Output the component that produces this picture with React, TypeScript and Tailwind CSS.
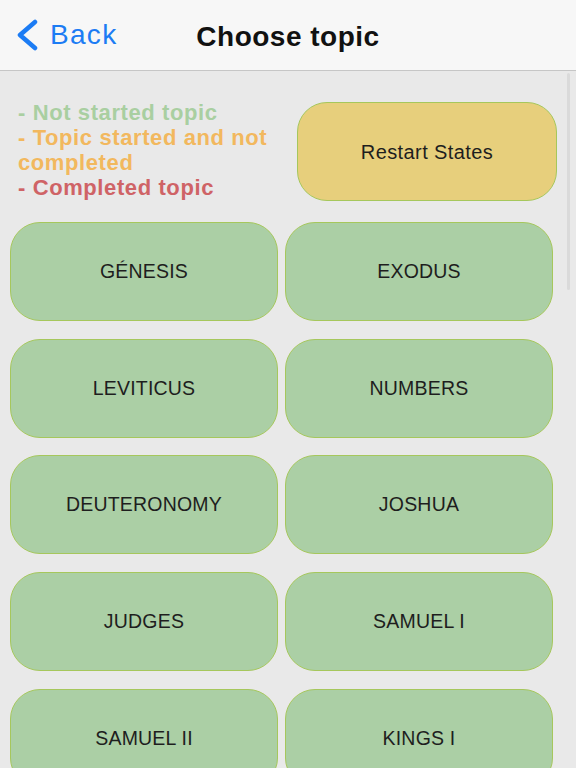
const topics = [
  "GÉNESIS",
  "EXODUS",
  "LEVITICUS",
  "NUMBERS",
  "DEUTERONOMY",
  "JOSHUA",
  "JUDGES",
  "SAMUEL I",
  "SAMUEL II",
  "KINGS I",
];

function Header() {
  return (
    <header className="relative flex h-[71px] items-center border-b border-[#c6c6c6] bg-[#f7f7f7]">
      <button className="flex items-center gap-[11px] pl-[15px] text-[28px] tracking-[1.3px] text-[#1c7cf4]">
        <svg width="24" height="32" viewBox="0 0 24 32" fill="none">
          <path d="M20 3 L5 16 L20 29" stroke="#1c7cf4" strokeWidth="4.5" strokeLinecap="round" strokeLinejoin="round" />
        </svg>
        <span>Back</span>
      </button>
      <h1 className="absolute left-1/2 top-[16px] -translate-x-1/2 text-[28px] font-semibold tracking-[0.5px] text-[#111]">
        Choose topic
      </h1>
    </header>
  );
}

function TopicButton({ label }: { label: string }) {
  return (
    <button className="flex h-[99px] items-center justify-center rounded-[30px] border border-[#a6c75c] bg-[#abcfa5] text-[19.5px] tracking-[0.2px] text-[#1e1e1e]">
      {label}
    </button>
  );
}

export default function App() {
  return (
    <div className="relative h-[768px] w-[576px] overflow-hidden bg-[#e9e9e9] font-['Liberation_Sans',Arial,sans-serif]">
      <Header />

      <div className="absolute right-[6px] top-[73px] h-[217px] w-[3px] rounded-full bg-[#dadada]" />

      <section className="flex items-start pl-[18px] pr-[19px] pt-[31px]">
        <div className="mt-[-2px] w-[272px] text-[22px] font-semibold leading-[25px] tracking-[0.6px]">
          <p className="text-[#a9cfa1]">- Not started topic</p>
          <p className="text-[#f2b85e]">- Topic started and not completed</p>
          <p className="text-[#cf6366]">- Completed topic</p>
        </div>
        <button className="ml-auto flex h-[99px] w-[260px] items-center justify-center rounded-[30px] border border-[#a6c75c] bg-[#e7cf7c] text-[20px] tracking-[0.4px] text-[#1e1e1e]">
          Restart States
        </button>
      </section>

      <main className="mt-[21px] grid grid-cols-2 gap-x-[7px] gap-y-[17.7px] pl-[10px] pr-[23px]">
        {topics.map((t) => (
          <TopicButton key={t} label={t} />
        ))}
      </main>
    </div>
  );
}
